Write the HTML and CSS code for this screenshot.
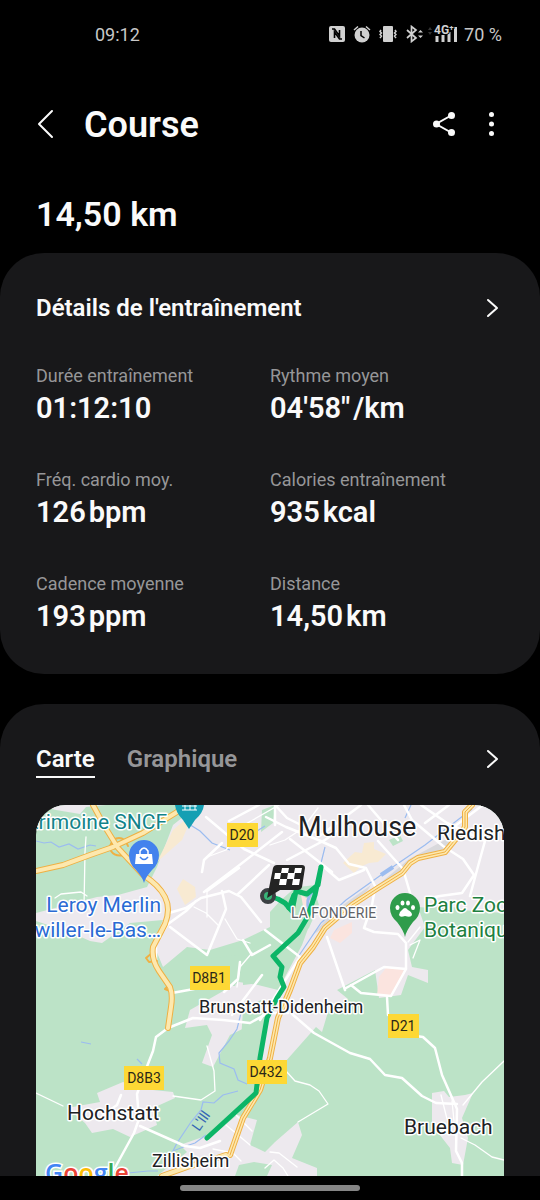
FILE: index.html
```html
<!DOCTYPE html>
<html lang="fr">
<head>
    <meta charset="utf-8">
    <meta name="viewport" content="width=device-width, initial-scale=1">
    <title>Course</title>
    <link rel="stylesheet" href="styles.css">
</head>
<body>
    <div class="status-bar">
        <span>09:12</span>
        <div class="status-icons">
            <svg width="16" height="16" viewBox="0 0 16 16" aria-hidden="true">
                <rect width="16" height="16" rx="2" fill="#d0d0d0"/>
                <path d="M3 3h2.500l5 7V4M13 13h-2.500l-5-7v6" fill="none" stroke="#000" stroke-width="1.600"/>
            </svg>
            <svg width="18" height="18" viewBox="0 0 18 18" aria-hidden="true">
                <circle cx="9" cy="10" r="7.500" fill="#d0d0d0"/>
                <path d="M1 5l4-3.500M17 5l-4-3.500" stroke="#d0d0d0" stroke-width="1.500" fill="none"/>
                <path d="M8 6v4.500l3.500 2.500" stroke="#000" stroke-width="1.500" fill="none"/>
            </svg>
            <svg width="18" height="16" viewBox="0 0 18 16" aria-hidden="true">
                <rect x="4" width="10" height="16" rx="1" fill="#d0d0d0"/>
                <path d="M2 4l-1 1.500 1.500 1.500L1 8.500 2.500 10 1 12M16 4l1 1.500L15.500 7 17 8.500 15.500 10 17 12" fill="none" stroke="#d0d0d0" stroke-width="1.500"/>
            </svg>
            <svg width="19" height="18" viewBox="0 0 19 18" aria-hidden="true">
                <path d="M2 5l9 8-4.500 3.500v-15L11 5l-9 8" fill="none" stroke="#d0d0d0" stroke-width="1.700"/>
                <path d="M13 7.500L15.500 5 18 7.500zM13 10.500L15.500 13 18 10.500z" fill="#d0d0d0"/>
            </svg>
            <svg class="signal" width="30" height="20" viewBox="0 0 30 20" aria-hidden="true">
                <path d="M0 6l2-3 2 3zM0 8l2 3 2-3z" fill="#333"/>
                <path d="M9 12v6M15 11v7M21 8v10M27.500 3v15" stroke="#d0d0d0" stroke-width="3"/>
                <text x="6" y="10" class="network">4G⁺</text>
            </svg>
            <span>70 %</span>
        </div>
    </div>

    <header class="app-bar">
        <a class="icon-btn back" href="#" aria-label="Retour">
            <svg width="18" height="30" viewBox="0 0 18 30"><path d="M16 2L3 15l13 13" fill="none" stroke="#fafafa" stroke-width="2" stroke-linecap="round" stroke-linejoin="round"/></svg>
        </a>
        <h1>Course</h1>
        <button class="icon-btn" aria-label="Partager">
            <svg width="24" height="26" viewBox="0 0 24 26">
                <path d="M20 4L4 13l16 9" fill="none" stroke="#fafafa" stroke-width="2"/>
                <circle cx="19.500" cy="4.500" r="3.500" fill="#fafafa"/>
                <circle cx="4.500" cy="13" r="3.500" fill="#fafafa"/>
                <circle cx="19.500" cy="21.500" r="3.500" fill="#fafafa"/>
            </svg>
        </button>
        <button class="icon-btn" aria-label="Plus d'options">
            <svg width="24" height="26" viewBox="0 0 24 26" fill="#fafafa">
                <circle cx="11.500" cy="3.500" r="2.500"/><circle cx="11.500" cy="13" r="2.500"/><circle cx="11.500" cy="22.500" r="2.500"/>
            </svg>
        </button>
    </header>

    <p class="total">14,50 km</p>

    <main>
        <section class="card details">
            <div class="card-head">
                <h2>Détails de l'entraînement</h2>
                <a class="more" href="#" aria-label="Voir les détails">
                    <svg width="14" height="22" viewBox="0 0 14 22"><path d="M2 3l9 8-9 8" fill="none" stroke="#fafafa" stroke-width="2" stroke-linecap="round" stroke-linejoin="round"/></svg>
                </a>
            </div>
            <dl class="stats">
                <div><dt>Durée entraînement</dt><dd>01:12:10</dd></div>
                <div><dt>Rythme moyen</dt><dd>04'58"<span class="unit">/km</span></dd></div>
                <div><dt>Fréq. cardio moy.</dt><dd>126<span class="unit">bpm</span></dd></div>
                <div><dt>Calories entraînement</dt><dd>935<span class="unit">kcal</span></dd></div>
                <div><dt>Cadence moyenne</dt><dd>193<span class="unit">ppm</span></dd></div>
                <div><dt>Distance</dt><dd>14,50<span class="unit">km</span></dd></div>
            </dl>
        </section>

        <section class="card map-card">
            <div class="card-head">
                <div class="tabs" role="tablist">
                    <button class="tab active" role="tab" aria-selected="true">Carte</button>
                    <button class="tab" role="tab" aria-selected="false">Graphique</button>
                </div>
                <a class="more" href="#" aria-label="Agrandir la carte">
                    <svg width="14" height="22" viewBox="0 0 14 22"><path d="M2 3l9 8-9 8" fill="none" stroke="#fafafa" stroke-width="2" stroke-linecap="round" stroke-linejoin="round"/></svg>
                </a>
            </div>

            <svg class="map" viewBox="0 0 468 371" role="img" aria-label="Carte du parcours">
                <defs>
                    <path id="a36" d="M0 66L27 60 54 50 77 42 107 28 141 7 146 0"/>
                    <path id="d8b1" d="M57 0L69 22 82 43 107 70Q123 80 129 92T129 119L117 142Q115 154 123 166L134 182Q137 190 135 202L132 223"/>
                    <path id="d432" d="M436 0L429 7V22L423 30 409 47 382 53 374 58 366 68 342 83 316 100 289 123 277 142 264 158 254 185 242 213 234 253 224 285 207 313 194 350"/>
                    <path id="west" d="M126 371L154 361 175 355 190 350"/>
                </defs>
                <rect width="468" height="371" class="land"/>

                <!-- built-up areas -->
                <g class="town">
                    <path d="M162 0L137 20 121 62 111 82 82 90 61 92 0 108V116L36 128 54 136 66 138 94 118 127 115 117 138 127 162 151 142 174 145 207 135 234 122 262 82 280 80 279 105 266 140 242 185 222 180 203 177 154 205 149 223 171 220 176 230 166 258 177 262 194 230 225 215 224 260 249 257 280 222 286 227 292 207 312 194 301 185 339 165 343 193 365 190 372 170 392 178 392 165 376 162 372 145 389 122 382 102 468 108V0z"/>
                    <path d="M61 288L87 277 107 284 137 287 139 293 117 303 121 320 94 332 77 324 56 328 49 318 31 303 64 297z"/>
                    <path d="M121 371L151 347 144 340 181 327 201 310 221 315 214 340 229 347 239 337 262 317 266 330 256 353 281 363V371z"/>
                    <path d="M396 288L408 286 413 292 429 290 437 288 426 313 432 333 427 360 416 358 414 343 396 320z"/>
                    <path d="M0 0H70L50 2 44 9 20 5z"/>
                </g>
                <g class="land">
                    <path d="M234 107L244 96 261 81 271 83 279 88 283 100 273 123 257 136 236 158 224 178 207 180 207 155 224 135 234 128z"/>
                    <path d="M176 153L204 150 207 162 199 181 174 180z"/>
                    <path d="M226 5L239 0 237 18 225 27z"/>
                    <path d="M218 357L236 360 231 371H199L203 360z"/>
                    <path d="M353 35L364 30 367 36 357 41z"/>
                    <path d="M207 205L225 195 230 212 221 260 199 280 205 235z"/>
                    <path d="M392 105L406 100 427 104 440 112 391 117z"/>
                </g>
                <path d="M137 25L158 7 146 35 121 57zM141 84L147 74 159 82 160 92 149 100z" class="beige"/>
                <path d="M307 58L319 47 326 48 328 38 338 37 338 44 350 49 342 57 333 58 324 62 318 68z" class="beige"/>
                <path d="M298 125L316 117 316 128 304 138 294 133zM341 190L343 172 350 163 367 163 368 170 355 192zM265 90L274 95 277 106 269 112z" class="pink"/>
                <path d="M342 80L373 54 409 35 419 32 405 46 380 53 363 68zM276 130L297 107 335 80 331 86 286 124z" class="industry"/>

                <!-- rivers and canal -->
                <g class="water">
                    <path d="M0 36l8 2 7-1 8 5 10-3 9 5 12-4 6 1M148 16l16 10 12 12 18 7M436 4L389 40 345 70 310 95 285 118 262 152M369 13l6-13M284 62l5-20"/>
                    <path d="M280 80l-8 28-10 22M207 200l-6 24-8 12-10 12 1 10 14 6 4 11 9 4M202 286l-15 4-9 8-11-1-2 8-10 12-14 21-4 8 13-5 9-3 11-8M92 368l20-2 10 0M45 237l10 2M101 254l5 5M221 26l8-5"/>
                    <path d="M345 70l12-8" stroke-width="4"/>
                    <path d="M277 86q-8 8-4 20" stroke-width="3"/>
                </g>

                <!-- minor roads -->
                <g class="road thin">
                    <path d="M50 32l-1 15-1 55M19 93l6-4 20-2 6 4M0 288l27 13M137 291l28 4 14-9-1-20-7-25M262 317l30-18-9-13-9-6-15-4-9-10M427 300l19-23 22-21M425 333l14 7 17 12 12 3M234 347l9 1 18 14M229 363l9-8 9 8 5 8"/>
                    <path d="M183 121l-13-13-12-6M171 87l0 25M216 148l-12 14-3 20M189 114l12 20 13 4M243 0l-35 20-18 25-19 7M282 3l-15 20-18 12-15 5M200 310l16 16M190 320l24 20M177 344l20 4 8 8"/>
                    <path d="M405 290l6 24M416 296l2 20M374 140l10-5-7 18M384 122l-12 15"/>
                </g>
                <g class="road">
                    <path d="M133 108l17-5 15-10 28-7 12 6 20 25M160 96l-10 10-18 13-12 18v20M166 67l2-12 18-17M134 122l37 28 19-46-4-18M168 87l33-25 45-35M171 86l32-23M201 90l32-30M170 12l38 32 30 14"/>
                    <path d="M193 16l30-16M230 12l20 10 30 12 20 9 13 16 17 4 9 18M239 0l12 13 34 17 20-15 20-15M251 55l38-20 12-9M289 63l14 12 25-10M254 34l42 33M342 36l25 28 10 34"/>
                    <path d="M368 0l8 15 31 26 20 13 11 16-12 18-22 3-15 3M385 0l26 18 38 18-5 18-10 37M389 18l24-18M415 24l32-24M332 0l30 35"/>
                    <path d="M339 83l-3 17-8 23 10 4 24 2 8 9v26l-22-2-38 21M229 125l35 27M264 152l-40 63M291 132l18 53M207 135l9 15 18-10M204 157l-2 17-14 13M226 170l-30 40"/>
                    <path d="M132 223l25-10 30 2 27 3 18-10 20 0M136 188l22-4M132 223l-12 9-3 14-7 18-9 25 2 25-5 14-23 42M85 290l-4 10-14 10M104 321l45 20 15 2 20-7M256 209l22 19 36 20 20 6 15 16 17 3 20 18 14 7 21 1M315 180l10 8 30 3 15-27M351 192l1 18M373 230l14 2 12 11 7 27 15 34-1 42 6 12v16M239 0v20"/>
                </g>
                <path d="M74 41q3-8 9-8t9 8M75 46q4 6 13 4M116 148l-6 5 3 4 8-1M133 180l-4 4 5 2" class="ramp"/>
                <g class="highway-edge"><use href="#a36"/><use href="#d8b1"/><use href="#d432"/><use href="#west"/></g>
                <g class="highway"><use href="#a36"/><use href="#d8b1"/><use href="#d432"/><use href="#west"/></g>
                <use href="#d432" class="median"/>

                <!-- workout track -->
                <path class="track" d="M233 91L242 94 249 98 256 106 260 86 271 89 282 80 285 62 279 90 271 113 262 128 237 151 246 162 244 172 248 182 241 193 231 213 224 253 220 288 171 333"/>
                <path class="track" d="M253 103L258 90"/>
                <circle cx="232" cy="91" r="6" class="start"/>
                <path d="M241 60H266Q269 60 269 63L266 82Q265 85 262 85H244L231 93 237 63Q238 60 241 60z" fill="#242424"/>
                <path d="M246 63h7l-1 5h-7zM259 63h7l-1 5h-7zM252 68h7l-1 6h-7zM239 68h6l-1 6h-6zM244 74h7l-1 6h-7zM257 74h7l-1 6h-7z" fill="#fff"/>

                <!-- place pins -->
                <path d="M139 0H168Q167 8 159 15L153 24 147 15Q140 8 139 0z" fill="#159fb3"/>
                <path d="M146 1h15M146 5h15M149 0v5M154 0v5M159 0v5" stroke="#fff" fill="none"/>
                <path d="M108 78Q107 73 100 65 93 59 93 50A15 15 0 0 1 123 50Q123 59 116 65 109 73 108 78z" fill="#4382ed"/>
                <path d="M100 49H116L117 59H99z" fill="#fff"/>
                <path d="M104 51V46Q108 40 112 46V51" fill="none" stroke="#fff" stroke-width="1.500"/>
                <path d="M104 52Q108 57 112 52" fill="none" stroke="#4382ed" stroke-width="1.500"/>
                <path d="M369 132Q368 126 361 117 354 111 354 103A15 15 0 0 1 384 103Q384 111 377 117 370 126 369 132z" fill="#2f9c4b"/>
                <g fill="#fff">
                    <path d="M363 110Q363 107 366 105 369 101 372 105 376 107 376 110 375 113 369 111 364 113 363 110z"/>
                    <ellipse cx="361.500" cy="102.500" rx="2" ry="2.500"/><ellipse cx="366.500" cy="98" rx="2" ry="2.500"/><ellipse cx="372" cy="98" rx="2" ry="2.500"/><ellipse cx="377" cy="102.500" rx="2" ry="2.500"/>
                </g>

                <!-- road numbers -->
                <g fill="#fdd835">
                    <rect x="191" y="18" width="31" height="24"/>
                    <rect x="154" y="161" width="40" height="24"/>
                    <rect x="352" y="209" width="31" height="24"/>
                    <rect x="211" y="255" width="40" height="24"/>
                    <rect x="88" y="261" width="40" height="24"/>
                </g>
                <g class="shield">
                    <text x="206" y="35">D20</text>
                    <text x="173" y="178">D8B1</text>
                    <text x="367" y="226">D21</text>
                    <text x="230" y="272">D432</text>
                    <text x="108" y="278">D8B3</text>
                </g>

                <!-- place names -->
                <text x="262" y="31" class="place city">Mulhouse</text>
                <text x="401" y="35" class="place large">Riedisheim</text>
                <text x="163" y="208" class="place">Brunstatt-Didenheim</text>
                <text x="31" y="315" class="place large">Hochstatt</text>
                <text x="368" y="329" class="place large">Bruebach</text>
                <text x="116" y="362" class="place">Zillisheim</text>
                <text x="255" y="113" class="place district">LA FONDERIE</text>
                <text x="131" y="24" class="place large museum" text-anchor="end">Patrimoine SNCF</text>
                <text x="125" y="107" class="place large shop" text-anchor="end">Leroy Merlin</text>
                <text x="125" y="132" class="place large shop" text-anchor="end">Morschwiller-le-Bas…</text>
                <text x="388" y="107" class="place large park">Parc Zoologique</text>
                <text x="388" y="132" class="place large park">Botanique</text>
                <text x="163" y="327" class="river" transform="rotate(-55 163 327)">L'Ill</text>
                <text x="9" y="377" class="google"><tspan fill="#4285f4">G</tspan><tspan fill="#ea4335">o</tspan><tspan fill="#fbbc05">o</tspan><tspan fill="#4285f4">g</tspan><tspan fill="#34a853">l</tspan><tspan fill="#ea4335">e</tspan></text>
            </svg>
        </section>
    </main>

    <footer class="nav-bar"><span class="handle"></span></footer>
</body>
</html>
```
FILE: styles.css
```css
* {
    box-sizing: border-box;
}

body {
    margin: 0;
    min-height: 100vh;
    display: flex;
    flex-direction: column;
    background-color: #000;
    color: #fafafa;
    font-family: Roboto, "Liberation Sans", sans-serif;
}

h1, h2, p, dl, dd {
    margin: 0;
}

button {
    padding: 0;
    border: none;
    background: none;
    color: inherit;
    font-family: inherit;
    cursor: pointer;
}

svg {
    display: block;
}

.status-bar {
    display: flex;
    justify-content: space-between;
    align-items: center;
    height: 68px;
    padding: 0 38px 0 95px;
    font-size: 18px;
    color: #c8c8c8;
}

.status-icons {
    display: flex;
    align-items: center;
    gap: 8px;
}

.signal {
    margin-left: -4px;
    margin-right: -2px;
}

.network {
    font-size: 12px;
    font-weight: 700;
    fill: #d0d0d0;
    stroke: #000;
    stroke-width: 2px;
    paint-order: stroke;
}

.app-bar {
    display: flex;
    align-items: center;
    height: 112px;
    padding: 0 36px;
}

.app-bar h1 {
    flex: 1;
    padding-top: 2px;
    font-size: 36px;
    font-weight: 600;
    line-height: 48px;
}

.icon-btn {
    margin-left: 24px;
}

.back {
    width: 48px;
    margin-left: 0;
}

.total {
    padding: 12px 36px 17px;
    font-size: 34px;
    font-weight: 600;
    line-height: 44px;
}

.card {
    padding: 32px 36px;
    border-radius: 44px;
    background-color: #18181a;
}

.card-head {
    display: flex;
    justify-content: space-between;
    align-items: center;
    height: 46px;
}

.card-head h2 {
    font-size: 24px;
    font-weight: 600;
}

.more {
    padding: 4px;
}

.stats {
    display: grid;
    grid-template-columns: 1fr 1fr;
    row-gap: 40px;
    padding: 33px 0 6px;
}

.stats dt {
    font-size: 18px;
    line-height: 24px;
    color: #969698;
}

.stats dd {
    font-size: 29px;
    font-weight: 600;
    line-height: 40px;
}

.unit {
    margin-left: 3px;
}

.map-card {
    margin-top: 30px;
    padding-bottom: 0;
    border-radius: 44px 44px 0 0;
}

.tabs {
    display: flex;
    gap: 32px;
    padding-top: 4px;
}

.tab {
    padding-bottom: 2px;
    border-bottom: 2px solid transparent;
    font-size: 24px;
    font-weight: 600;
    line-height: 30px;
    color: #969698;
}

.tab.active {
    border-color: #fafafa;
    color: #fafafa;
}

.map {
    width: 100%;
    height: auto;
    margin-top: 23px;
    border-radius: 30px 30px 0 0;
}

.land {
    fill: #bce3c7;
}

.town {
    fill: #ede9ee;
}

.beige {
    fill: #f8ead2;
}

.pink {
    fill: #fbe4df;
}

.industry {
    fill: #d9d9dc;
}

.water {
    fill: none;
    stroke: #9bbcf0;
    stroke-width: 1.2;
}

.road, .ramp, .highway-edge, .highway, .median, .track {
    fill: none;
    stroke-linecap: round;
    stroke-linejoin: round;
}

.road {
    stroke: #fff;
    stroke-width: 2.5;
}

.road.thin {
    stroke-width: 1.3;
}

.ramp {
    stroke: #efb043;
    stroke-width: 2;
}

.highway-edge {
    stroke: #efb043;
    stroke-width: 6;
}

.highway {
    stroke: #fde8ae;
    stroke-width: 4;
}

.median {
    stroke: #efb043;
    stroke-width: 1;
}

.track {
    stroke: #0cb567;
    stroke-width: 5;
}

.start {
    fill: #38b478;
    stroke: #3c4043;
    stroke-width: 4;
}

.shield {
    font-size: 14px;
    text-anchor: middle;
    fill: #2b2718;
}

.place {
    font-size: 18px;
    fill: #202124;
    stroke: #fff;
    stroke-width: 3px;
    stroke-linejoin: round;
    paint-order: stroke;
}

.place.large {
    font-size: 21px;
}

.place.city {
    font-size: 27px;
}

.place.district {
    font-size: 14px;
    fill: #5f6368;
}

.place.museum {
    fill: #12838a;
}

.place.shop {
    fill: #2a6bd4;
}

.place.park {
    fill: #20803f;
}

.river {
    font-size: 14px;
    fill: #3566b5;
}

.google {
    font-family: "Open Sans", Roboto, sans-serif;
    font-size: 25px;
    font-weight: 600;
    stroke: #fff;
    stroke-width: 3px;
    paint-order: stroke;
}

.nav-bar {
    display: flex;
    justify-content: center;
    align-items: center;
    height: 24px;
    background-color: #000;
}

.handle {
    width: 33.333%;
    height: 6px;
    border-radius: 3px;
    background-color: #858585;
}
```
